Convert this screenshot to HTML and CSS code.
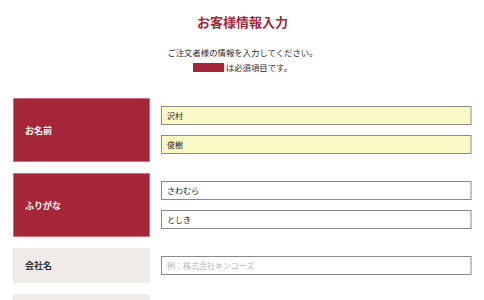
FILE: index.html
```html
<!DOCTYPE html>
<html lang="ja">
<head>
    <meta charset="UTF-8">
    <meta name="viewport" content="width=device-width, initial-scale=1.0">
    <title>お客様情報入力</title>
    <link rel="stylesheet" href="styles.css">
</head>
<body>

<div class="customer-form">
    <h1>お客様情報入力</h1>
    <div class="lead">
        <p>ご注文者様の情報を入力してください。</p>
        <p><span class="required-mark"></span> は必須項目です。</p>
    </div>

    <form class="form-table">
        <div class="form-row">
            <div class="form-label required">お名前</div>
            <div class="form-fields">
                <input type="text" class="filled" value="沢村">
                <input type="text" class="filled" value="俊樹">
            </div>
        </div>

        <div class="form-row">
            <div class="form-label required">ふりがな</div>
            <div class="form-fields">
                <input type="text" value="さわむら">
                <input type="text" value="としき">
            </div>
        </div>

        <div class="form-row">
            <div class="form-label">会社名</div>
            <div class="form-fields">
                <input type="text" placeholder="例：株式会社キンコーズ">
            </div>
        </div>

        <div class="form-row">
            <div class="form-label">部署名</div>
            <div class="form-fields">
                <input type="text" placeholder="例：営業部">
            </div>
        </div>
    </form>
</div>

</body>
</html>
```

FILE: styles.css
```css
body {
    margin: 0;
    background: #fff;
    font-family: "Noto Sans CJK JP", "Noto Sans", sans-serif;
    color: #333;
}
.customer-form {
    padding: 0 12px 0 13px;
}
.customer-form h1 {
    margin: 14px 0 0;
    font-size: 13px;
    line-height: 16px;
    text-align: center;
    color: #a52637;
}
.lead {
    margin-top: 15px;
    text-align: center;
}
.lead p {
    margin: 0;
    font-size: 8.4px;
    line-height: 15px;
    color: #2a2a2a;
}
.required-mark {
    display: inline-block;
    width: 31px;
    height: 9px;
    background: #a52637;
    vertical-align: middle;
    margin-top: -2px;
}
.form-table {
    margin-top: 23px;
    display: flex;
    flex-direction: column;
    gap: 11px;
}
.form-row {
    display: flex;
    gap: 11px;
}
.form-label {
    width: 137px;
    box-sizing: border-box;
    display: flex;
    align-items: center;
    padding-left: 11px;
    font-size: 9px;
    font-weight: bold;
    background: #efebe8;
    color: #333;
    border: 1px solid #efebe8;
}
.form-label.required {
    background: #a52637;
    border-color: #d0707e;
    color: #fff;
}
.form-fields {
    flex: 1;
    display: flex;
    flex-direction: column;
    gap: 10px;
    padding: 8px 0;
}
.form-fields input {
    height: 19px;
    box-sizing: border-box;
    margin: 0;
    padding: 0 5px;
    border: 1px solid #8a8a8a;
    border-right: 2px solid #c4c4c4;
    background: #fff;
    font-family: inherit;
    font-size: 8px;
    color: #222;
    outline: none;
}
.form-fields input.filled {
    background: #fafac6;
}
.form-fields input::placeholder {
    color: #b5b5b5;
}
```
